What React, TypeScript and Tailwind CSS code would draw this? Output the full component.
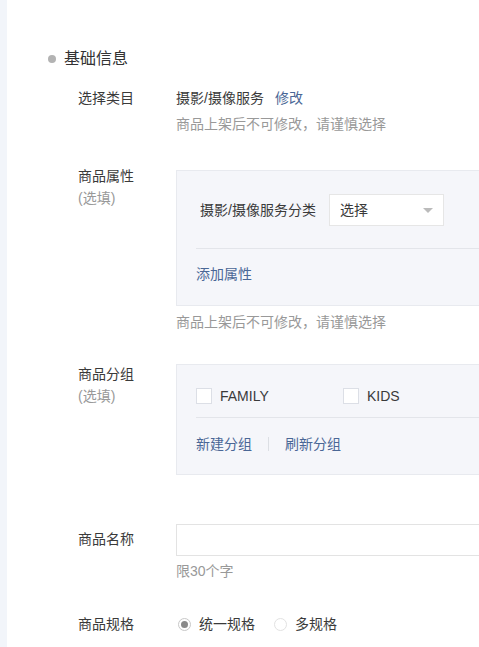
import type { ReactNode } from "react";

const font = { fontFamily: '"Liberation Sans", "Noto Sans CJK SC", sans-serif' };

function Label({ children, optional }: { children: ReactNode; optional?: boolean }) {
  return (
    <div className="w-[98px] shrink-0">
      <div className="text-[14px] leading-[20px] text-[#3a3a3a]">{children}</div>
      {optional && <div className="mt-[2px] text-[14px] leading-[20px] text-[#999]">(选填)</div>}
    </div>
  );
}

function Hint({ children, className = "" }: { children: ReactNode; className?: string }) {
  return <div className={`text-[14px] leading-[20px] text-[#999] ${className}`}>{children}</div>;
}

function Checkbox({ label }: { label: string }) {
  return (
    <label className="flex w-[147px] items-center gap-[8px]">
      <span className="h-[16px] w-[16px] border border-[#dcdfe6] bg-white" />
      <span className="text-[14px] leading-[20px] text-[#3a3a3a]">{label}</span>
    </label>
  );
}

function Radio({ label, checked }: { label: string; checked?: boolean }) {
  return (
    <label className="flex items-center gap-[8px]">
      <span
        className={`flex h-[13px] w-[13px] items-center justify-center rounded-full border ${
          checked ? "border-[#c8c8c8]" : "border-[#e2e2e2]"
        } bg-white`}
      >
        {checked && <span className="h-[7px] w-[7px] rounded-full bg-[#8a8a8a]" />}
      </span>
      <span className="text-[14px] leading-[20px] text-[#3a3a3a]">{label}</span>
    </label>
  );
}

export default function App() {
  return (
    <div className="flex h-[647px] w-full overflow-hidden bg-white" style={font}>
      <div className="w-[7px] shrink-0 bg-[#f2f5fa]" />
      <div className="min-w-0 flex-1 overflow-hidden pt-[49px]">
        {/* section title */}
        <div className="ml-[41px] flex items-center gap-[8px]">
          <span className="h-[8px] w-[8px] rounded-full bg-[#b3b3b3]" />
          <span className="text-[16px] leading-[20px] text-[#333]">基础信息</span>
        </div>

        <div className="ml-[71px] w-[520px]">
          {/* 选择类目 */}
          <div className="mt-[19px] flex">
            <Label>选择类目</Label>
            <div>
              <div className="flex items-center text-[14px] leading-[20px]">
                <span className="text-[#3a3a3a]">摄影/摄像服务</span>
                <a className="ml-[11px] cursor-pointer text-[#4a6796]">修改</a>
              </div>
              <Hint className="mt-[6px]">商品上架后不可修改，请谨慎选择</Hint>
            </div>
          </div>

          {/* 商品属性 */}
          <div className="mt-[32px] flex">
            <Label optional>商品属性</Label>
            <div className="flex-1 pt-[4px]">
              <div className="border border-[#e8eaef] bg-[#f5f6fa] px-[19px] pb-[21px] pt-[23px]">
                <div className="flex items-center gap-[13px] pl-[4px]">
                  <span className="text-[14px] leading-[20px] text-[#3a3a3a]">摄影/摄像服务分类</span>
                  <div className="flex h-[32px] w-[115px] items-center justify-between border border-[#e6e6e6] bg-white pl-[10px] pr-[10px]">
                    <span className="text-[14px] text-[#3a3a3a]">选择</span>
                    <span className="h-0 w-0 border-x-[5px] border-t-[5px] border-x-transparent border-t-[#bbb]" />
                  </div>
                </div>
                <div className="mt-[22px] border-t border-[#e3e5ea]" />
                <a className="mt-[15px] block cursor-pointer text-[14px] leading-[20px] text-[#4a6796]">添加属性</a>
              </div>
              <Hint className="mt-[6px]">商品上架后不可修改，请谨慎选择</Hint>
            </div>
          </div>

          {/* 商品分组 */}
          <div className="mt-[32px] flex">
            <Label optional>商品分组</Label>
            <div className="flex-1">
              <div className="border border-[#e8eaef] bg-[#f5f6fa] px-[19px] pb-[20px] pt-[21px]">
                <div className="flex items-center">
                  <Checkbox label="FAMILY" />
                  <Checkbox label="KIDS" />
                </div>
                <div className="mt-[11px] border-t border-[#e3e5ea]" />
                <div className="mt-[16px] flex items-center gap-[16px] text-[14px] leading-[20px] text-[#4a6796]">
                  <a className="cursor-pointer">新建分组</a>
                  <span className="h-[14px] w-px bg-[#dcdfe4]" />
                  <a className="cursor-pointer">刷新分组</a>
                </div>
              </div>
            </div>
          </div>

          {/* 商品名称 */}
          <div className="mt-[49px] flex">
            <div className="pt-[5px]">
              <Label>商品名称</Label>
            </div>
            <div className="flex-1">
              <input className="block h-[32px] w-full border border-[#e3e3e3] bg-white px-[10px] text-[14px] outline-none" />
              <Hint className="mt-[5px]">限30个字</Hint>
            </div>
          </div>

          {/* 商品规格 */}
          <div className="mt-[33px] flex items-center">
            <Label>商品规格</Label>
            <div className="flex items-center gap-[19px] pl-[2px]">
              <Radio label="统一规格" checked />
              <Radio label="多规格" />
            </div>
          </div>
        </div>
      </div>
    </div>
  );
}
